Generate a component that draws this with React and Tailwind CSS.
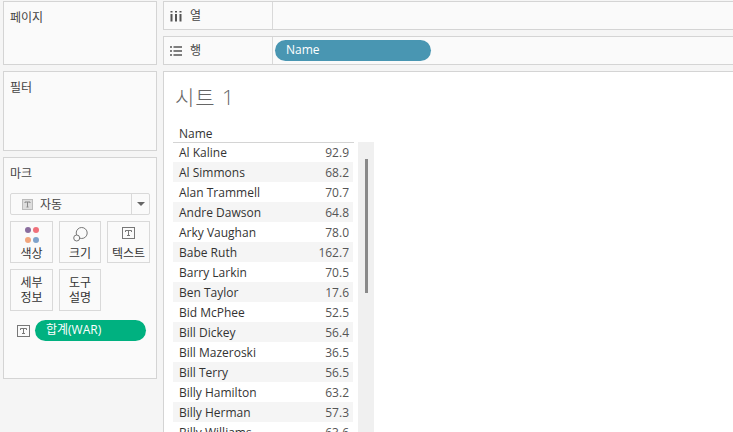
import React from 'react';

const rows = [
  ['Al Kaline', '92.9'],
  ['Al Simmons', '68.2'],
  ['Alan Trammell', '70.7'],
  ['Andre Dawson', '64.8'],
  ['Arky Vaughan', '78.0'],
  ['Babe Ruth', '162.7'],
  ['Barry Larkin', '70.5'],
  ['Ben Taylor', '17.6'],
  ['Bid McPhee', '52.5'],
  ['Bill Dickey', '56.4'],
  ['Bill Mazeroski', '36.5'],
  ['Bill Terry', '56.5'],
  ['Billy Hamilton', '63.2'],
  ['Billy Herman', '57.3'],
  ['Billy Williams', '63.6'],
];

const TextBox = ({ className = 'w-[13px] h-[12px]' }) => (
  <svg viewBox="0 0 13 12" className={className}>
    <rect x="0.5" y="0.5" width="12" height="11" fill="none" stroke="#777" />
    <path d="M3.5 5V3.5H9.5V5M6.5 3.5V8.5M5 8.5H8" fill="none" stroke="#777" />
  </svg>
);

const MarkButton = ({ children, className = '' }) => (
  <div className={`flex flex-col items-center border border-[#d9d9d9] text-[12px] leading-[17px] text-[#333] ${className}`}>
    {children}
  </div>
);

const Shelf = ({ icon, label, children }) => (
  <div className="flex h-[29px] shrink-0 border border-r-0 border-[#d4d4d4] bg-[#fafafa]">
    <div className="flex w-[109px] items-center border-r border-[#d9d9d9] pl-[6px]">
      {icon}
      <span className="ml-[8px] pt-[1px] text-[12px] text-[#444]">{label}</span>
    </div>
    <div className="flex flex-1 items-center pl-[2px]">{children}</div>
  </div>
);

export default function App() {
  return (
    <div
      className="flex h-[432px] w-[733px] gap-[6px] overflow-hidden bg-[#f5f5f5] pt-[1px] pl-[3px]"
      style={{ fontFamily: '"Open Sans", "Noto Sans CJK KR", sans-serif' }}
    >
      {/* left cards */}
      <div className="flex w-[154px] shrink-0 flex-col gap-[6px]">
        <div className="h-[64px] border border-[#d4d4d4] bg-[#fafafa] pt-[7px] pl-[6px] text-[12px] text-[#444]">페이지</div>
        <div className="h-[80px] border border-[#d4d4d4] bg-[#fafafa] pt-[7px] pl-[6px] text-[12px] text-[#444]">필터</div>
        <div className="h-[222px] border border-[#d4d4d4] bg-[#fafafa] px-[6px] pt-[7px]">
          <div className="text-[12px] leading-[17px] text-[#444]">마크</div>
          <div className="mt-[11px] flex h-[22px] w-[140px] items-center rounded-[2px] border border-[#d9d9d9] text-[12px] text-[#444]">
            <div className="flex flex-1 items-center pl-[11px]">
              <svg viewBox="0 0 11 11" className="h-[11px] w-[11px]">
                <rect x="0.5" y="0.5" width="10" height="10" fill="#ddd" stroke="#bbb" />
                <path d="M3 4V3H8V4M5.5 3V8M4.5 8H6.5" fill="none" stroke="#888" />
              </svg>
              <span className="ml-[7px] pt-[2px]">자동</span>
            </div>
            <div className="flex h-full w-[18px] items-center justify-center border-l border-[#d9d9d9]">
              <div className="h-0 w-0 border-x-[4px] border-t-[4px] border-x-transparent border-t-[#666]"></div>
            </div>
          </div>
          <div className="mt-[6px] flex gap-[6px]">
            <MarkButton className="h-[42px] w-[43px]">
              <div className="mt-[5px] grid h-[17px] grid-cols-2 gap-x-[2px] gap-y-[2px]">
                <div className="h-[6px] w-[6px] rounded-full bg-[#8a6d9e]"></div>
                <div className="h-[6px] w-[6px] rounded-full bg-[#f0707a]"></div>
                <div className="h-[6px] w-[6px] rounded-full bg-[#f2a57c]"></div>
                <div className="h-[6px] w-[6px] rounded-full bg-[#7fa3cc]"></div>
              </div>
              <span className="mt-[1px]">색상</span>
            </MarkButton>
            <MarkButton className="h-[42px] w-[42px]">
              <svg viewBox="0 0 16 16" className="mt-[4px] h-[16px] w-[16px]">
                <circle cx="9.7" cy="7" r="5.5" fill="none" stroke="#777" />
                <circle cx="4.7" cy="12" r="3" fill="#fafafa" stroke="#777" />
              </svg>
              <span className="mt-[3px]">크기</span>
            </MarkButton>
            <MarkButton className="h-[42px] w-[43px]">
              <TextBox className="mt-[5px] h-[12px] w-[13px]" />
              <span className="mt-[6px]">텍스트</span>
            </MarkButton>
          </div>
          <div className="mt-[6px] flex gap-[6px]">
            <MarkButton className="h-[42px] w-[43px] pt-[5px]">
              <span className="leading-[15px]">세부</span>
              <span className="leading-[15px]">정보</span>
            </MarkButton>
            <MarkButton className="h-[42px] w-[42px] pt-[5px]">
              <span className="leading-[15px]">도구</span>
              <span className="leading-[15px]">설명</span>
            </MarkButton>
          </div>
          <div className="mt-[9px] flex items-center pl-[7px]">
            <TextBox />
            <div className="ml-[5px] flex h-[21px] w-[111px] items-center rounded-full bg-[#00b180] pb-[2px] pl-[11px] text-[12px] text-white">
              합계(WAR)
            </div>
          </div>
        </div>
      </div>

      {/* shelves and sheet */}
      <div className="flex min-w-0 flex-1 flex-col gap-[6px]">
        <Shelf
          label="열"
          icon={
            <svg viewBox="0 0 12 12" className="h-[12px] w-[12px]">
              <path d="M1.5 4V11.5M6 4V11.5M10.5 4V11.5" stroke="#555" strokeWidth="2" fill="none" />
              <path d="M1.5 1V2.5M6 1V2.5M10.5 1V2.5" stroke="#555" strokeWidth="2" fill="none" />
            </svg>
          }
        />
        <Shelf
          label="행"
          icon={
            <svg viewBox="0 0 12 12" className="h-[12px] w-[12px]">
              <path d="M0 2H2M0 6H2M0 10H2M3.5 2H12M3.5 6H12M3.5 10H12" stroke="#555" strokeWidth="1.6" fill="none" />
            </svg>
          }
        >
          <div className="flex h-[21px] w-[156px] items-center rounded-full bg-[#4996b2] pb-[1px] pl-[11px] text-[12px] text-white">Name</div>
        </Shelf>
        <div className="min-h-0 flex-1 overflow-hidden border-t border-l border-[#d4d4d4] bg-white pl-[9px]">
          <div className="pt-[11px] pl-[2px] text-[21px] leading-[28px] font-light tracking-[1px] text-[#666]">시트 1</div>
          <div className="mt-[14px] flex items-start">
            <div className="w-[181px]">
              <div className="h-[18px] border-b border-[#d4d4d4] pl-[6px] text-[12px] leading-[17px] text-[#333]">Name</div>
              <div className="w-[180px]">
                {rows.map(([name, war], i) => (
                  <div
                    key={name}
                    className={`flex items-center justify-between pt-[1px] pr-[4px] pl-[6px] text-[12px] ${i === 0 ? 'h-[19px]' : 'h-[20px]'} ${i % 2 === 1 ? 'bg-[#f5f5f5]' : 'bg-white'}`}
                  >
                    <span className="text-[#333]">{name}</span>
                    <span className="text-[#555]">{war}</span>
                  </div>
                ))}
              </div>
            </div>
            <div className="mt-[17px] ml-[4px] flex h-[300px] w-[16px] justify-center bg-[#f0f0f0] pt-[17px]">
              <div className="h-[134px] w-[3px] bg-[#8a8a8a]"></div>
            </div>
          </div>
        </div>
      </div>
    </div>
  );
}
